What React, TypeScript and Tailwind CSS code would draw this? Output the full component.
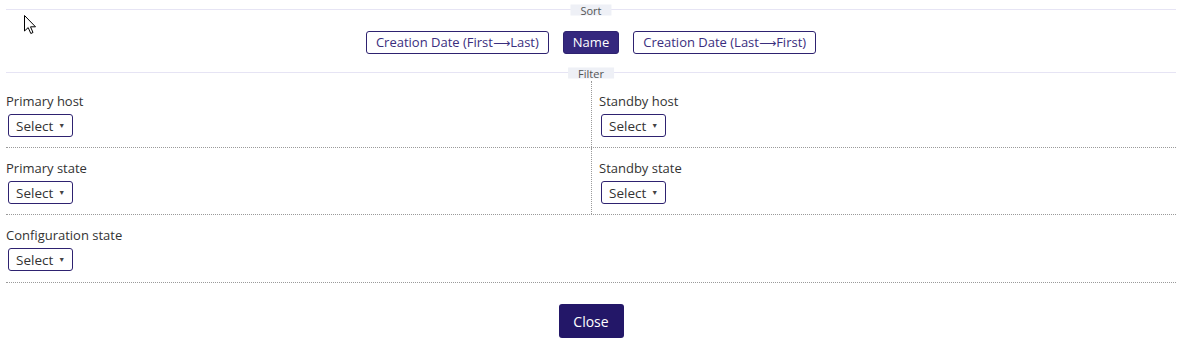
import React from "react";

const font = { fontFamily: '"Open Sans", "Noto Sans", sans-serif' };

function SectionLabel({ text }: { text: string }) {
  return (
    <span className="absolute left-1/2 top-0 -translate-x-1/2 -translate-y-1/2 bg-[#eef0f6] px-[10px] text-[11px] leading-[11px] text-[#555]">
      {text}
    </span>
  );
}

function SelectBox() {
  return (
    <button className="flex h-[23px] items-center gap-[5px] rounded-[3px] border border-[#2e2270] bg-white px-[7px] text-[13.5px] leading-[20px] text-[#333]">
      Select
      <span className="text-[7px] leading-none text-[#444]">▼</span>
    </button>
  );
}

function FilterCell({ label, divider, last }: { label: string; divider?: boolean; last?: boolean }) {
  return (
    <div
      className={`pt-[11px] ${last ? "pb-[11px]" : "pb-[10px]"} ${
        divider ? "border-l border-dotted border-[#9a9a9a] pl-[7px]" : ""
      }`}
    >
      <div className="text-[13px] leading-[18px] text-[#333]">{label}</div>
      <div className="mt-[4px] pl-[2px]">
        <SelectBox />
      </div>
    </div>
  );
}

function SortLabel({ text }: { text: string }) {
  const parts = text.split("→");
  if (parts.length < 2) return <>{text}</>;
  return (
    <>
      {parts[0]}
      <span className="font-['DejaVu_Sans'] text-[12px]">⟶</span>
      {parts[1]}
    </>
  );
}

export default function App() {
  const sorts = ["Creation Date (First→Last)", "Name", "Creation Date (Last→First)"];

  return (
    <div className="relative h-[348px] w-[1182px] overflow-hidden bg-white" style={font}>
      {/* cursor */}
      <svg className="absolute left-[24px] top-[15px]" width="14" height="20" viewBox="0 0 14 20">
        <path
          d="M0.5 0.5 L0.5 16 L4.2 12.6 L6.8 18.5 L9 17.5 L6.5 11.8 L11.5 11.8 Z"
          fill="white"
          stroke="black"
          strokeWidth="1"
          strokeLinejoin="round"
        />
      </svg>

      <div className="px-[6px] pt-[9px]">
        {/* Sort */}
        <div className="relative border-t border-[#e6e4f4] pt-[21px] pb-[18px]">
          <SectionLabel text="Sort" />
          <div className="flex justify-center gap-[14px]">
            {sorts.map((s) => (
              <button
                key={s}
                className={`h-[23px] rounded-[3px] border border-[#2e2270] text-[13px] leading-[21px] ${
                  s === "Name" ? "bg-[#35287e] px-[9px] text-white" : "bg-white px-[9px] text-[#3a2e7e]"
                }`}
              >
                <SortLabel text={s} />
              </button>
            ))}
          </div>
        </div>

        {/* Filter */}
        <div className="relative border-t border-[#e6e4f4] pt-[8px]">
          <SectionLabel text="Filter" />
          <div className="grid grid-cols-2 border-b border-dotted border-[#9a9a9a]">
            <FilterCell label="Primary host" />
            <FilterCell label="Standby host" divider />
          </div>
          <div className="grid grid-cols-2 border-b border-dotted border-[#9a9a9a]">
            <FilterCell label="Primary state" />
            <FilterCell label="Standby state" divider />
          </div>
          <div className="border-b border-dotted border-[#9a9a9a]">
            <FilterCell label="Configuration state" last />
          </div>
        </div>

        <div className="flex justify-center pt-[21px]">
          <button className="h-[34px] w-[65px] rounded-[3px] bg-[#231768] text-[14px] text-white">
            Close
          </button>
        </div>
      </div>
    </div>
  );
}
